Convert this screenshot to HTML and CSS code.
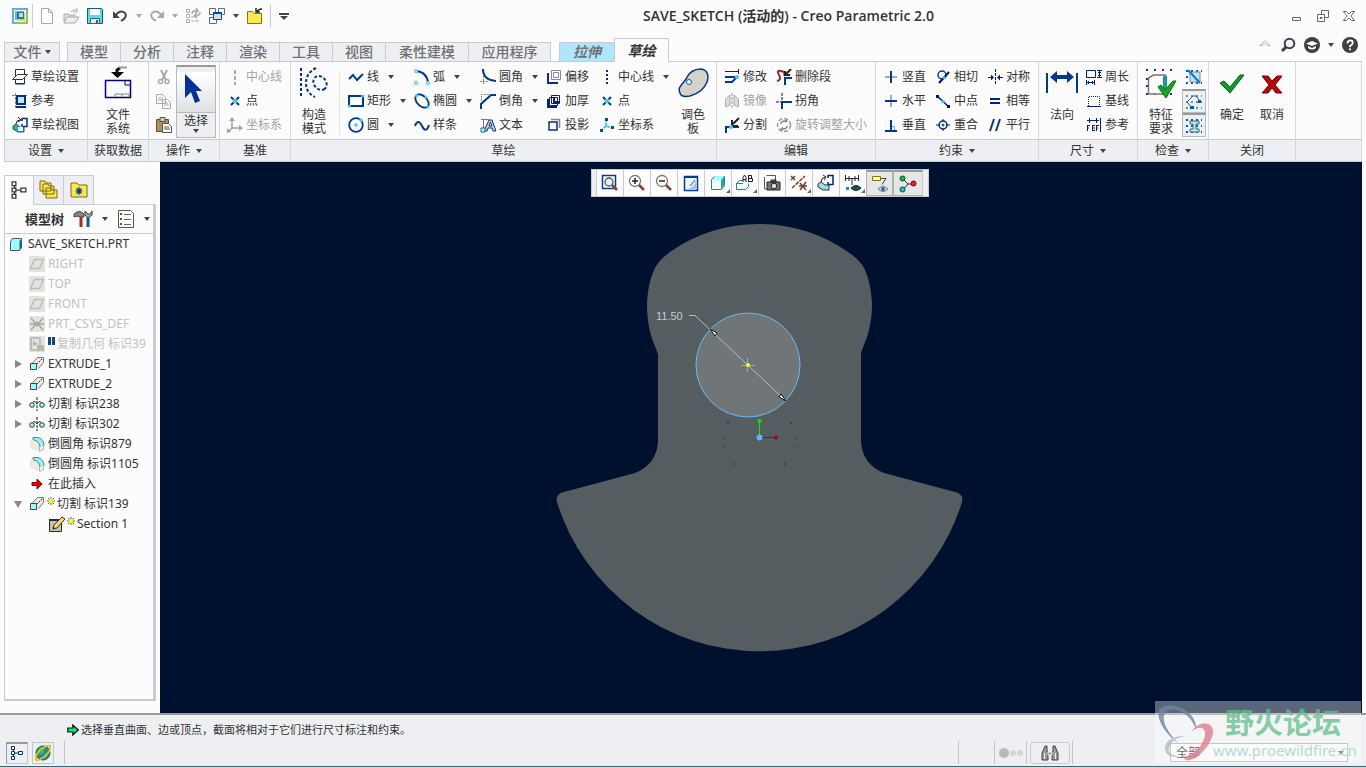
FILE: index.html
```html
<!DOCTYPE html>
<html lang="zh-CN">
<head>
<meta charset="utf-8">
<title>SAVE_SKETCH (活动的) - Creo Parametric 2.0</title>
<link rel="stylesheet" href="styles.css">
</head>
<body>
<svg class="defs" aria-hidden="true">
  <symbol id="i-plane" viewBox="0 0 16 16"><path fill="#e3e3e3" d="M0 0h16v16H0z"/><path d="M5.500 3.500h9l-4 9h-9z" fill="none" stroke="#c2bfae" stroke-width="1.500"/></symbol>
  <symbol id="i-extrude" viewBox="0 0 16 16"><path d="M3.500 7 8.500 1.500h6v5l-5 6" fill="#ecece4" stroke="#777"/><path d="M7.500 8.500 14 2" stroke="#222" stroke-dasharray="2 1"/><path d="M1.500 7.500h6v6h-6z" fill="#9ff" stroke="#445"/></symbol>
  <symbol id="i-cut" viewBox="0 0 16 16"><path d="M8 1v14" stroke="#222" stroke-dasharray="3 1"/><circle cx="3" cy="9" r="2.300" fill="#9ff" stroke="#333"/><circle cx="13" cy="9" r="2.300" fill="#9ff" stroke="#333"/><path d="M4 6q2-2 4 2M12 6q-2-2-4 2" fill="none" stroke="#333"/></symbol>
  <symbol id="i-round" viewBox="0 0 16 16"><path d="M1 4l3-2 7 1 3 5v6l-5 1-8-3z" fill="#eceadd"/><path d="M4 1.500h5q6 2 6 8l-4 2q0-6-7-8z" fill="#8ef6ff" stroke="#57808a"/><path d="M10.500 11v4.500l4-2v-4" fill="#f4f3ea" stroke="#bbb9aa"/></symbol>
  <symbol id="i-pt" viewBox="0 0 16 16"><path d="M4 4l8 8M12 4l-8 8" stroke="#003b94" stroke-width="2"/><path d="M6 6h4v4H6z" fill="#3ce"/></symbol>
  <symbol id="i-tree" viewBox="0 0 16 16"><path d="M4.500 3v10M4.500 8h6" stroke="currentColor"/><path d="M2.500 1.500h3v3h-3zM2.500 6.500h3v3h-3zM2.500 11.500h3v3h-3zM9.500 6.500h4v3h-4z" fill="#fff" stroke="currentColor"/></symbol>
  <symbol id="i-star" viewBox="0 0 8 8"><path d="M4 0v8M0 4h8M1 1l6 6M7 1 1 7" stroke="#333" stroke-width=".8"/><circle cx="4" cy="4" r="2.200" fill="#ff0"/></symbol>
  <symbol id="i-csys" viewBox="0 0 16 16"><path d="M5 2v9h9M5 11l-3 3" fill="none" stroke="currentColor" stroke-width="1.500"/><path d="M5 0l3 4H2zM16 11l-4 3V8zM0 16v-5l4 4z" fill="currentColor"/></symbol>
</svg>

<header class="titlebar">
  <div class="quick">
    <svg class="ic app" viewBox="0 0 16 16"><path fill="#5fb0d8" d="M0 0h16v16H0z"/><path fill="#8fc65a" d="M16 3v13H3z"/><path fill="#fff" d="M2 2h12v12H2z"/><path fill="#68b6dc" d="M3 3h9v9H3z"/><path fill="#c4dd6b" d="M5 5h8v8H5z"/><path fill="#267d9a" d="M5 4h7v7H5z"/><path fill="#b9dfe9" d="M7 5h4v4H7z"/></svg>
    <span class="bar"></span>
    <button aria-label="新建"><svg class="ic" viewBox="0 0 16 16"><path d="M2.500.5h7l4 4v11h-11zM9.500.5v4h4" fill="#fff" stroke="#aaa"/></svg></button>
    <button aria-label="打开"><svg class="ic" viewBox="0 0 16 16"><path d="M1 14V6h4l1 1h6v2" fill="#ddd" stroke="#aaa"/><path d="M4 9h12l-4 6H1z" fill="#eee" stroke="#aaa"/><path d="M8 4q3-4 6-1M14 0v4h-4" fill="none" stroke="#aaa"/></svg></button>
    <button aria-label="保存"><svg class="ic" viewBox="0 0 16 16"><path d="M.5.5h14l1 1v14H.5z" fill="#58dce8" stroke="#175c70"/><path fill="#fff" d="M3 1h10v6H3z"/><path fill="#e8e8e8" stroke="#367" d="M3.500 10.500h9v5h-9z"/><path fill="#367" d="M9 12h2v3H9z"/></svg></button>
    <button aria-label="撤消" class="gap1"><svg class="ic" viewBox="0 0 16 16"><path d="M3 8Q8 1 13 5q3 4-4 8" fill="none" stroke="#444" stroke-width="2"/><path d="M1 3v7h7z" fill="#444"/></svg></button>
    <i class="caret dim"></i>
    <button aria-label="重做"><svg class="ic" viewBox="0 0 16 16"><path d="M13 8Q8 1 3 5q-3 4 4 8" fill="none" stroke="#aaa" stroke-width="2"/><path d="M15 3v7H8z" fill="#aaa"/></svg></button>
    <i class="caret dim"></i>
    <button aria-label="重新生成"><svg class="ic" viewBox="0 0 16 16"><path d="M1.500 1.500h3v3h-3zM1.500 6.500h3v3h-3zM1.500 11.500h3v3h-3zM6 13h3M10 13h4M6 9h3" fill="none" stroke="#aaa"/><path d="M7 6q0-4 5-3M15 4q0 4-5 4M11 0l2 3-3 2M12 5 9 8l3 2" fill="none" stroke="#aaa" stroke-width="1.500"/></svg></button>
    <button aria-label="窗口"><svg class="ic" viewBox="0 0 16 16"><path d="M.5.500h6v6h-6zM9.500.500h6v6h-6zM.500 9.500h7v6h-7z" fill="#fff" stroke="#667"/><path d="M4.500 4.500h8v7h-8z" fill="#cfe2f5" stroke="#0548a8"/><path fill="#0548a8" d="M4 4h9v2H4z"/></svg></button>
    <i class="caret"></i>
    <button aria-label="关闭"><svg class="ic" viewBox="0 0 16 16"><path d="M.5 15.500v-12h5l2 2h7v10z" fill="#ffe84b" stroke="#86721b"/><path d="M10 4q1-3 5-3M9 0v4h4" fill="none" stroke="#222" stroke-width="1.500"/></svg></button>
    <span class="bar last"></span>
    <button aria-label="自定义" class="custom"><i></i><i class="caret"></i></button>
  </div>
  <h1>SAVE_SKETCH (活动的) - Creo Parametric 2.0</h1>
  <div class="winbtns">
    <button aria-label="最小化"><svg viewBox="0 0 12 12"><path d="M1.500 7.500h8v3h-8z" fill="none" stroke="#666"/></svg></button>
    <button aria-label="还原"><svg viewBox="0 0 12 12"><path d="M4.500 4V.5h7v7H8M.5 4.500h7v7h-7zM3 7.500h2v1H3z" fill="none" stroke="#666"/></svg></button>
    <button aria-label="关闭窗口"><svg viewBox="0 0 12 12"><path d="M.5 1.500h3L6 4l2.500-2.500h3L8 6l3.500 4.500h-3L6 8l-2.500 2.500h-3L4 6z" fill="none" stroke="#666"/></svg></button>
  </div>
</header>

<nav class="tabrow">
  <button class="tab file">文件<i class="caret"></i></button>
  <div class="tabs">
    <button class="tab">模型</button><button class="tab">分析</button><button class="tab">注释</button><button class="tab">渲染</button><button class="tab">工具</button><button class="tab">视图</button><button class="tab wide">柔性建模</button><button class="tab wide">应用程序</button>
  </div>
  <button class="tab ctx">拉伸</button><button class="tab active">草绘</button>
  <div class="help">
    <button aria-label="最小化功能区"><svg viewBox="0 0 16 16" width="14"><path d="M2 8.500 8 3l6 5.500h-3.500L8 6 5.500 8.500z" fill="none" stroke="#aaa"/></svg></button>
    <button aria-label="搜索"><svg viewBox="0 0 16 16" width="16"><circle cx="9.500" cy="6.500" r="4.800" fill="#eef7ff" stroke="#3c3f43" stroke-width="2"/><path d="M6 10l-4 4" stroke="#3c3f43" stroke-width="3"/></svg></button>
    <button aria-label="学习中心"><svg viewBox="0 0 16 16" width="16"><circle cx="8" cy="8" r="8" fill="#3c3f43"/><path d="M2 6.500 8 4l6 2.500L8 9zM4 9v2q4 3 8 0V9L8 11z" fill="#fff"/></svg></button>
    <i class="caret"></i>
    <button aria-label="帮助"><svg viewBox="0 0 16 16" width="16"><circle cx="8" cy="8" r="8" fill="#3c3f43"/><path d="M5.500 6.500q0-3 2.800-3 2.500 0 2.500 2.200Q10.800 7.500 8 9v1.200" fill="none" stroke="#fff" stroke-width="1.800"/><circle cx="8" cy="12.300" r="1.100" fill="#fff"/></svg></button>
  </div>
</nav>

<main class="ribbon">
  <section class="group">
    <div class="body pad">
      <div class="col">
        <button class="t"><svg class="ic" viewBox="0 0 16 16"><path d="M3.500.5h9v14h-9z" fill="#fff" stroke="#003087"/><path d="M5.500 5.500h10l-5 5H.5z" fill="#fff" stroke="#333"/><path d="M3.500 11v4h9V9" fill="none" stroke="#003087"/></svg>草绘设置</button>
        <button class="t"><svg class="ic" viewBox="0 0 16 16"><path d="M0 2.500h16M3.500 0v16" stroke="#888" stroke-dasharray="3 1"/><path d="M4 2h10v10H4z" fill="#003087"/><path d="M6 4h6v6H6z" fill="#c6e5dc"/><path d="M4 14h10" stroke="#003087" stroke-width="2"/></svg>参考</button>
        <button class="t"><svg class="ic" viewBox="0 0 16 16"><path d="M10 1.500h5v8h-5M10 1v3M10 9V7" fill="none" stroke="#003087" stroke-width="1.500"/><path d="M4 7q0-4 4-4M6 0l3 3-3 2" fill="none" stroke="#222"/><path d="M1 9l3-2 4 3h4v5H6l-5-3z" fill="#3aa" stroke="#355"/><path fill="#cff" d="M6 10h5v4H6z"/></svg>草绘视图</button>
      </div>
    </div>
    <div class="label">设置<i class="caret"></i></div>
  </section>
  <section class="group">
    <div class="body center">
      <button class="big files"><svg viewBox="0 0 28 34"><path d="M1.500 14.500h25v17h-25z" fill="#fafafa" stroke="#00008b" stroke-width="1.500"/><path d="M21 14v5h5" fill="none" stroke="#00008b"/><path d="M11 31v-3h14v3M18 28v3" fill="none" stroke="#888"/><path d="M7 6h13l-6.500 6z"/><path d="M13 7V4l3-2" fill="none" stroke="#111" stroke-width="3"/><path d="M15 1.500h8" stroke="#999" stroke-width="2"/></svg>文件<br>系统</button>
    </div>
    <div class="label">获取数据</div>
  </section>
  <section class="group">
    <div class="body pad">
      <div class="col narrow">
        <button class="t" aria-label="剪切"><svg class="ic" viewBox="0 0 16 16"><path d="M5 1l5 10M11 1 6 11" stroke="#aaa" stroke-width="2"/><circle cx="4.500" cy="12.500" r="2" fill="none" stroke="#aaa" stroke-width="1.500"/><circle cx="11" cy="12.500" r="2" fill="none" stroke="#aaa" stroke-width="1.500"/></svg></button>
        <button class="t" aria-label="复制"><svg class="ic" viewBox="0 0 16 16"><path d="M.5 1.500h6l3 3v6h-9zM2 5h5M2 7h5M6.500 6.500h5l3 3v6h-8zM8 10h4M8 12h5" fill="#fbfbfb" stroke="#aaa"/></svg></button>
        <button class="t" aria-label="粘贴"><svg class="ic" viewBox="0 0 16 16"><path d="M.5 2.500h12v12H.5z" fill="#ae925a" stroke="#665132"/><path d="M4 .5h5v4H4z" fill="#ccc" stroke="#555"/><path d="M6.500 6.500h6l3 3v6h-9zM8 10h5M8 12h6" fill="#fff" stroke="#555"/></svg></button>
      </div>
      <button class="pick"><span><svg viewBox="0 0 24 34"><path d="M3 2v24l6-6 4 11 5-2-4-10h6z" fill="#003399"/></svg></span>选择<i class="caret"></i></button>
    </div>
    <div class="label">操作<i class="caret"></i></div>
  </section>
  <section class="group">
    <div class="body pad">
      <div class="col">
        <button class="t off" disabled><svg class="ic" viewBox="0 0 16 16"><path d="M8 1v15" stroke="#aaa" stroke-width="2" stroke-dasharray="4 2"/></svg>中心线</button>
        <button class="t"><svg class="ic"><use href="#i-pt"/></svg>点</button>
        <button class="t off" disabled><svg class="ic"><use href="#i-csys"/></svg>坐标系</button>
      </div>
    </div>
    <div class="label">基准</div>
  </section>
  <section class="group">
    <div class="body pad">
      <button class="big construct"><svg viewBox="0 0 30 34"><g fill="none" stroke="#003399" stroke-width="2" stroke-dasharray="3 2"><path d="M2 2v30M17 2Q7 7 7 17t9 14"/><ellipse cx="21" cy="17" rx="7.500" ry="6" transform="rotate(50 21 17)"/></g></svg>构造<br>模式</button>
      <div class="col c1 ruled">
        <button class="t"><svg class="ic" viewBox="0 0 16 16"><path d="M1 10l4-4 4 5 6-6" fill="none" stroke="#003894" stroke-width="2"/></svg>线<i class="caret"></i></button>
        <button class="t"><svg class="ic" viewBox="0 0 16 16"><path d="M1 3h14v10H1z" fill="none" stroke="#003894" stroke-width="2"/><circle cx="1.500" cy="13" r="1.500" fill="#4cf"/><circle cx="14.500" cy="3" r="1.500" fill="#4cf"/></svg>矩形<i class="caret"></i></button>
        <button class="t"><svg class="ic" viewBox="0 0 16 16"><circle cx="8" cy="8" r="6.800" fill="none" stroke="#003894" stroke-width="1.800"/><circle cx="8" cy="8" r="1.800" fill="#4cf"/><circle cx="13" cy="3" r="1.800" fill="#4cf"/></svg>圆<i class="caret"></i></button>
      </div>
      <div class="col c1">
        <button class="t"><svg class="ic" viewBox="0 0 16 16"><path d="M2 2q11 1 12 12" fill="none" stroke="#003894" stroke-width="2"/><g fill="#dff" stroke="#2bc5f3"><circle cx="2" cy="2" r="1.500"/><circle cx="14" cy="14" r="1.500"/><circle cx="2" cy="14" r="1.500"/></g></svg>弧<i class="caret"></i></button>
        <button class="t"><svg class="ic" viewBox="0 0 16 16"><ellipse cx="8" cy="8" rx="8" ry="5" transform="rotate(45 8 8)" fill="none" stroke="#003894" stroke-width="1.800"/><g fill="#4cf"><circle cx="2.500" cy="2.500" r="1.500"/><circle cx="12" cy="4" r="1.500"/><circle cx="14" cy="14" r="1.500"/></g></svg>椭圆<i class="caret"></i></button>
        <button class="t"><svg class="ic" viewBox="0 0 16 16"><path d="M1 9q3-8 7 0t7-1" fill="none" stroke="#003894" stroke-width="2"/></svg>样条</button>
      </div>
      <div class="col c1">
        <button class="t"><svg class="ic" viewBox="0 0 16 16"><path d="M3.500 7v9M0 12.500h9" stroke="#888" stroke-dasharray="2 1"/><path d="M3 0q0 11 13 12" fill="none" stroke="#003894" stroke-width="2"/></svg>圆角<i class="caret"></i></button>
        <button class="t"><svg class="ic" viewBox="0 0 16 16"><path d="M1.500 8V1.500H9" fill="none" stroke="#888" stroke-dasharray="2 1"/><path d="M1 16v-5L11 2h5" fill="none" stroke="#003894" stroke-width="2"/></svg>倒角<i class="caret"></i></button>
        <button class="t"><svg class="ic" viewBox="0 0 16 16"><path d="M1 2.500h8M3.500 2v9" stroke="#777"/><path d="M4 14 9 3h3l4 11h-3l-1-3H8l-1 3zM9 9h3l-1.500-4z" fill="#cfd0c8" stroke="#003894"/><path d="M1 11h4v4H1z" fill="#dff" stroke="#06a"/></svg>文本</button>
      </div>
      <div class="col c2">
        <button class="t"><svg class="ic" viewBox="0 0 16 16"><path d="M5.500 1.500h9v9h-9zM7.500 3.500h5v5h-5z" fill="none" stroke="#888"/><path d="M2 4v10h10" fill="none" stroke="#003087" stroke-width="2"/></svg>偏移</button>
        <button class="t"><svg class="ic" viewBox="0 0 16 16"><path d="M5.500 2.500h8v8h-8zM3.500 4.500h8v8h-8z" fill="none" stroke="#00208b"/><path d="M2 6v8h9M8 5v4h6" fill="none" stroke="#00208b" stroke-width="2"/></svg>加厚</button>
        <button class="t"><svg class="ic" viewBox="0 0 16 16"><path d="M5 2.500h8.500V11" fill="none" stroke="#888" stroke-width="1.500"/><path d="M3 5h8v8H3z" fill="#fff" stroke="#003087" stroke-width="1.500"/></svg>投影</button>
      </div>
      <div class="col c3">
        <button class="t"><svg class="ic" viewBox="0 0 16 16"><path d="M8 1v15" stroke="#003087" stroke-width="2" stroke-dasharray="2 2"/></svg>中心线<i class="caret"></i></button>
        <button class="t"><svg class="ic"><use href="#i-pt"/></svg>点</button>
        <button class="t"><svg class="ic" viewBox="0 0 16 16"><path d="M7 2v7l7 2M7 9l-5 5" fill="none" stroke="#4bc7ec" stroke-width="2" stroke-dasharray="3 1"/><path d="M6 1h3v3H6zM12 9h3v3h-3zM1 12h3v3H1z" fill="#00509e"/></svg>坐标系</button>
      </div>
      <button class="big palette"><svg viewBox="0 0 32 34"><path d="M3 27C0 21 6 18 9 13 12 6 17 3 24 3 31 4 32 10 30 16 27 24 20 28 13 30 8 31 4 31 3 27z" fill="#d5d3c7" stroke="#003894" stroke-width="1.500"/><circle cx="12" cy="16" r="2.500" fill="#fff" stroke="#0657a8"/></svg>调色<br>板</button>
    </div>
    <div class="label">草绘</div>
  </section>
  <section class="group">
    <div class="body pad">
      <div class="col c4">
        <button class="t"><svg class="ic" viewBox="0 0 16 16"><path d="M1 2.500h14M14.500 0v5" stroke="#222"/><path d="M1 8h10M1 13h7l5-5" fill="none" stroke="#003894" stroke-width="2"/><circle cx="13" cy="8" r="2" fill="#4cf"/></svg>修改</button>
        <button class="t off" disabled><svg class="ic" viewBox="0 0 16 16"><path d="M8 0v16" stroke="#999" stroke-dasharray="3 1"/><path d="M1.500 6 6 2v10l-4.500 2zM14.500 6 10 2v10l4.500 2z" fill="#ddd" stroke="#aaa"/></svg>镜像</button>
        <button class="t"><svg class="ic" viewBox="0 0 16 16"><path d="M2 16v-6h13" fill="none" stroke="#003894" stroke-width="2"/><path d="M15 1 9 7M8 3v6h6" fill="none" stroke="#222" stroke-width="2"/><circle cx="7" cy="10" r="2" fill="#4cf"/></svg>分割</button>
      </div>
      <div class="col">
        <button class="t"><svg class="ic" viewBox="0 0 16 16"><path d="M1 12Q6 11 3 6T5 2t3 5" fill="none" stroke="#a22424" stroke-width="2"/><path d="M9 16V9h7" fill="none" stroke="#003894" stroke-width="2"/><path d="M15 0l-6 6M9 2v4h5" fill="none" stroke="#222" stroke-width="2"/></svg>删除段</button>
        <button class="t"><svg class="ic" viewBox="0 0 16 16"><path d="M6 0v7M0 9h5" stroke="#888" stroke-width="2" stroke-dasharray="3 1"/><path d="M6 16V9h10" fill="none" stroke="#003894" stroke-width="2"/></svg>拐角</button>
        <button class="t off" disabled><svg class="ic" viewBox="0 0 16 16"><circle cx="8" cy="8" r="6.500" fill="none" stroke="#999" stroke-width="1.500" stroke-dasharray="4 2"/><path d="M5 7q0-3 4-3M11 9q0 3-4 3" fill="none" stroke="#888" stroke-width="1.500"/><path d="M9 2l3 2-3 2zM7 10l-3 2 3 2z" fill="#888"/></svg>旋转调整大小</button>
      </div>
    </div>
    <div class="label">编辑</div>
  </section>
  <section class="group">
    <div class="body pad">
      <div class="col c5">
        <button class="t"><svg class="ic" viewBox="0 0 16 16"><path d="M2 8h12" stroke="#aaa" stroke-width="2"/><path d="M8 2v12" stroke="#003894" stroke-width="2"/></svg>竖直</button>
        <button class="t"><svg class="ic" viewBox="0 0 16 16"><path d="M8 2v12" stroke="#aaa" stroke-width="2"/><path d="M2 8h12" stroke="#003894" stroke-width="2"/></svg>水平</button>
        <button class="t"><svg class="ic" viewBox="0 0 16 16"><path d="M9 9.500h2.500V13" fill="none" stroke="#999"/><path d="M8 3v10M2 14h12" stroke="#003894" stroke-width="2"/></svg>垂直</button>
      </div>
      <div class="col c5">
        <button class="t"><svg class="ic" viewBox="0 0 16 16"><circle cx="7" cy="6" r="4" fill="none" stroke="#003894" stroke-width="1.500"/><path d="M4 14 14 3" stroke="#00107d" stroke-width="2"/><circle cx="9" cy="8.500" r="1.500" fill="#3ce"/></svg>相切</button>
        <button class="t"><svg class="ic" viewBox="0 0 16 16"><path d="M2 3l12 11" stroke="#00107d" stroke-width="1.500"/><path d="M1 2h3v3H1zM12 12h3v3h-3z" fill="#00107d"/><circle cx="8" cy="8.500" r="1.800" fill="#3ce"/></svg>中点</button>
        <button class="t"><svg class="ic" viewBox="0 0 16 16"><circle cx="8" cy="8" r="4" fill="none" stroke="#00208b" stroke-width="1.500"/><path d="M1 8h4M11 8h4M8 2v2M8 12v2" stroke="#00208b"/><circle cx="8" cy="8" r="1.500" fill="#07a"/></svg>重合</button>
      </div>
      <div class="col">
        <button class="t"><svg class="ic" viewBox="0 0 16 16"><path d="M8.500 0v16" stroke="#00208b" stroke-dasharray="3 1"/><path d="M1 8.500h5M11 8.500h5" stroke="#00208b"/><path d="M4 5.500l3 3-3 3zM13 5.500l-3 3 3 3z" fill="#00208b"/></svg>对称</button>
        <button class="t"><svg class="ic" viewBox="0 0 16 16"><path d="M3 6h10M3 10h10" stroke="#00208b" stroke-width="2"/></svg>相等</button>
        <button class="t"><svg class="ic" viewBox="0 0 16 16"><path d="M3 14 7 2M9 14l4-12" stroke="#003894" stroke-width="2"/></svg>平行</button>
      </div>
    </div>
    <div class="label">约束<i class="caret"></i></div>
  </section>
  <section class="group">
    <div class="body pad">
      <button class="big normal"><svg viewBox="0 0 32 34"><path d="M1 7v20M31 7v20" stroke="#003894" stroke-width="2"/><path d="M4 11l7-6v4h10V5l7 6-7 6v-4H11v4z" fill="#003894"/></svg>法向</button>
      <div class="col">
        <button class="t"><svg class="ic" viewBox="0 0 16 16"><path d="M.5 1.500h9v7h-9zM11 1.500h5M11 8.500h5M13.500 1v8M.5 11v5M8.500 11v5M1 13.500h7M12 3.500h3M12 6.500h3M2.500 12v3M6.500 12v3" fill="none" stroke="#00208b"/></svg>周长</button>
        <button class="t"><svg class="ic" viewBox="0 0 16 16"><path d="M2.500 13V3.500h11V13" fill="none" stroke="#00208b" stroke-dasharray="1 1"/><path d="M1 13.500h14" stroke="#00208b"/></svg>基线</button>
        <button class="t"><svg class="ic" viewBox="0 0 16 16"><path d="M1 3.500h12M3.500 1v5M10.500 1v5M14.500 1v14M1.500 8v6M1 8.500h3M1 11h2M6 8.500h3M6 11h3M6 13.500h3M6.500 8v6M10.500 8v6M10 8.500h3M10 11h2" stroke="#00208b"/></svg>参考</button>
      </div>
    </div>
    <div class="label">尺寸<i class="caret"></i></div>
  </section>
  <section class="group">
    <div class="body pad">
      <button class="big check"><svg viewBox="0 0 32 34"><path d="M1 4h28M1 13h4M1 20h4M1 28h28" stroke="#003894" stroke-width="2" stroke-dasharray="2 6"/><path d="M3.500 12l5-3h12v16l-3 3h-14z" fill="#fff" stroke="#777" stroke-width="1.500"/><path d="M18 10h4v14l-4 3z" fill="#159d9d"/><path d="M13 21l3-2 4 5 8-9h3l-10 17z" fill="#1ba51b" stroke="#0c710c"/></svg>特征<br>要求</button>
      <div class="toggles">
        <button aria-label="着色封闭环"><svg class="ic" viewBox="0 0 16 16"><path d="M0 2h16M0 8h3M0 14h16" stroke="#005ab3" stroke-width="2" stroke-dasharray="2 3"/><path d="M4 3h10v10H4z" fill="#c9e1ee" stroke="#789"/><path d="M2 1l12 13" stroke="#007bdb" stroke-width="2"/></svg></button>
        <button class="on" aria-label="突出显示开放端"><svg class="ic" viewBox="0 0 16 16"><path d="M0 2h16M0 8h16M0 14h16" stroke="#3177bd" stroke-width="1.500" stroke-dasharray="2 3"/><path d="M5 13 1 8l6-6h3l4 5" fill="none" stroke="#456"/><path d="M4 12h4v3H4zM12 6h3v3h-3z" fill="#005ab3"/></svg></button>
        <button class="on" aria-label="重叠几何"><svg class="ic" viewBox="0 0 16 16"><path d="M0 2h16M0 8h16M0 14h16" stroke="#005ab3" stroke-width="2" stroke-dasharray="2 3"/><path d="M4 3h9v3h-3v5h3v3H4v-3h3V6H4z" fill="#b5ecf1" stroke="#367"/></svg></button>
      </div>
    </div>
    <div class="label">检查<i class="caret"></i></div>
  </section>
  <section class="group">
    <div class="body pad">
      <button class="big close"><svg viewBox="0 0 28 34"><path d="M2 17l4-2 6 6L22 9h4L12 27z" fill="#0b9b27" stroke="#08621c"/></svg>确定</button>
      <button class="big close"><svg viewBox="0 0 28 34"><path d="M4 10h6l4 5 5-5h5l-7 9 7 8h-6l-4-5-4 5H4l7-8z" fill="#b50909" stroke="#780000"/></svg>取消</button>
    </div>
    <div class="label">关闭</div>
  </section>
  <section class="group"><div class="body"></div><div class="label"></div></section>
</main>

<div class="work">
  <aside class="side">
    <div class="sidetabs">
      <button class="cur" aria-label="模型树"><svg class="tr"><use href="#i-tree"/></svg></button>
      <button aria-label="文件夹浏览器"><svg class="tr" viewBox="0 0 20 20"><path d="M1 11V1h5l1 2h5v8zM4 14V4h5l1 2h5v8zM7 18V8h5l1 2h5v8z" fill="#fbe849" stroke="#7a681b"/></svg></button>
      <button aria-label="收藏夹"><svg class="tr" viewBox="0 0 20 20"><path d="M2 17V3h6l2 2h8v12z" fill="#fbe849" stroke="#7a681b"/><path d="M10 7v8M6.500 11h7M7.500 8.500l5 5M12.500 8.500l-5 5" stroke="#003894" stroke-width="1.200"/></svg></button>
    </div>
    <div class="panel">
      <div class="phead"><b>模型树</b>
        <button aria-label="设置"><svg viewBox="0 0 20 20" width="20"><path d="M1 5q5-5 10 0v3H8L4 7 1 8z" fill="#888" stroke="#444"/><path d="M8 8v10" stroke="#a72a1a" stroke-width="3"/><path d="M15 8v10" stroke="#0959a5" stroke-width="3"/><path d="M12 2v4l3 3 4-3V2l-2 3h-2z" fill="#aaa" stroke="#444"/></svg></button><i class="caret"></i>
        <button aria-label="显示"><svg viewBox="0 0 18 20" width="18"><path d="M1.500 1.500h12l3 3v14h-15z" fill="#fffef4" stroke="#555"/><path d="M7 5.500h7M7 10.500h7M7 15.500h7" stroke="#666"/><path d="M3.500 4.500h1v1h-1zM3.500 9.500h1v1h-1zM3.500 14.500h1v1h-1z" stroke="#333"/></svg></button><i class="caret"></i>
      </div>
      <ul class="tree">
        <li class="root"><svg class="ic" viewBox="0 0 16 16"><path d="M2.500 5.500l2-3h9v9l-2 3h-9z" fill="#9ff" stroke="#456"/><path d="M11.500 14V5l2-2v9z" fill="#266"/></svg>SAVE_SKETCH.PRT</li>
        <li class="off"><i></i><svg class="ic"><use href="#i-plane"/></svg>RIGHT</li>
        <li class="off"><i></i><svg class="ic"><use href="#i-plane"/></svg>TOP</li>
        <li class="off"><i></i><svg class="ic"><use href="#i-plane"/></svg>FRONT</li>
        <li class="off"><i></i><svg class="ic" viewBox="0 0 16 16"><path fill="#e3e3e3" d="M0 0h16v16H0z"/><path d="M1 8h14M2 2l5 6-5 6M14 2 9 8l5 6M8 5v6" fill="none" stroke="#aaa897" stroke-width="1.500"/></svg>PRT_CSYS_DEF</li>
        <li class="off tight"><i></i><svg class="ic" viewBox="0 0 16 16"><path fill="#e3e3e3" d="M0 0h16v16H0z"/><path d="M2 2h9v12H2z" fill="none" stroke="#b5b3a2" stroke-width="1.500"/><path d="M8 9h7v6H8zM4 5l5 3-5 2z" fill="#b9b7a5"/></svg><svg class="mini" viewBox="0 0 8 8"><path d="M1 0h3v8H1zM5 0h3v8H5z" fill="#124583"/></svg>复制几何 标识39</li>
        <li><i class="shut"></i><svg class="ic"><use href="#i-extrude"/></svg>EXTRUDE_1</li>
        <li><i class="shut"></i><svg class="ic"><use href="#i-extrude"/></svg>EXTRUDE_2</li>
        <li><i class="shut"></i><svg class="ic"><use href="#i-cut"/></svg>切割 标识238</li>
        <li><i class="shut"></i><svg class="ic"><use href="#i-cut"/></svg>切割 标识302</li>
        <li><i></i><svg class="ic"><use href="#i-round"/></svg>倒圆角 标识879</li>
        <li><i></i><svg class="ic"><use href="#i-round"/></svg>倒圆角 标识1105</li>
        <li><i></i><svg class="ic" viewBox="0 0 16 16"><path d="M3 6.500h5V3l5 5-5 5V9.500H3z" fill="#e00" stroke="#900"/></svg>在此插入</li>
        <li class="tight"><i class="open"></i><svg class="ic"><use href="#i-extrude"/></svg><svg class="mini"><use href="#i-star"/></svg>切割 标识139</li>
        <li class="tight sub"><i></i><svg class="ic" viewBox="0 0 16 16"><path d="M.5 3.500h12v12H.5z" fill="#c9c0a4" stroke="#152b64"/><path fill="#152b64" d="M0 3h13v2H0z"/><path d="M4 13l1-4 8-8 3 2-8 9z" fill="#f8d568" stroke="#333"/><path fill="#111" d="M4 13v-2l2 1z"/></svg><svg class="mini"><use href="#i-star"/></svg>Section 1</li>
      </ul>
    </div>
  </aside>
  <section class="canvas">
    <svg class="scene" viewBox="160 162 1202 551" role="img" aria-label="草绘">
      <path d="M658 354C654 342 647 332 647 303C648 287 651 276 655 268Q659 260 670 252A155 155 0 0 1 848 252Q860 260 864 268C868 276 871 287 872 303C872 332 864 342 861 354V441Q862 464 884 473L955 492Q964 494 962 502A212 212 0 0 1 557 502Q555 494 564 492L635 473Q657 464 658 441Z" fill="#565d60"/>
      <circle cx="748" cy="365" r="52" fill="#707577" stroke="#63baff"/>
      <path d="M689 315.500h6L785 400" fill="none" stroke="#bbb"/>
      <path d="M710 329l7 4-2 3zM786 401l-7-4 2-3z" fill="#eee" stroke="#111"/>
      <path d="M741 365.500h14M747.500 358v14" stroke="#63baff"/><circle cx="748" cy="365" r="2" fill="#ff0"/>
      <path d="M759.500 421v16" stroke="#0e0" /><path d="M759 437.500h17" stroke="#a00036"/>
      <circle cx="759.500" cy="421" r="2" fill="#0e0"/><circle cx="776" cy="437.500" r="2" fill="#a00036"/><circle cx="759.500" cy="437.500" r="3" fill="#5bb2ff"/>
      <path d="M727 423h2M790 423h2M723 439h1M795 439h1M724 447h1M794 447h1M733 464h2M784 464h2" stroke="#252b2e"/>
      <text x="656" y="320" class="dim-text">11.50</text>
    </svg>
    <div class="gbar">
      <button aria-label="重新调整"><svg viewBox="0 0 18 18"><path d="M1.500 1.500h13v13h-13z" fill="#fff" stroke="#003f91" stroke-width="1.500"/><circle cx="8" cy="8" r="4" fill="#e4f1f5" stroke="#555" stroke-width="1.300"/><path d="M11 11l5 5" stroke="#784b35" stroke-width="2.500"/></svg></button>
      <button aria-label="放大"><svg viewBox="0 0 18 18"><circle cx="7" cy="7" r="5.500" fill="#fff" stroke="#777" stroke-width="1.300"/><path d="M4 7h6M7 4v6" stroke="#222" stroke-width="1.500"/><path d="M11 11l5 5" stroke="#784b35" stroke-width="2.500"/></svg></button>
      <button aria-label="缩小"><svg viewBox="0 0 18 18"><circle cx="7" cy="7" r="5.500" fill="#fff" stroke="#777" stroke-width="1.300"/><path d="M4 7h6" stroke="#222" stroke-width="1.500"/><path d="M11 11l5 5" stroke="#784b35" stroke-width="2.500"/></svg></button>
      <button aria-label="重画"><svg viewBox="0 0 18 18"><path d="M2.500 2.500h13v14h-13z" fill="#eef7ff" stroke="#003f91" stroke-width="1.500"/><path fill="#003f91" d="M2 2h14v2H2z"/><path d="M5 15q7-1 9-9v9z" fill="#a9c5dd"/><path d="M8 12l5-6" stroke="#35506a"/></svg></button>
      <button class="more" aria-label="显示样式"><svg viewBox="0 0 18 18"><path d="M2.500 5.500l3-3h10v9l-3 4h-10z" fill="#eefcfc" stroke="#477"/><path d="M12 6l3-4v10l-3 3z" fill="#2aa"/><path d="M3 6h9l3-4H6z" fill="#9ff"/></svg></button>
      <button class="more" aria-label="已命名视图"><svg viewBox="0 0 18 18"><path d="M.5 9.500l3-3h3M.5 9.500v6h9l3-3v-3M.5 9.500H7" fill="#eff" stroke="#477"/><path d="M7 8V3.500L8.500 1 10 3.500V8M7 5.500h3M12.500 1v7M12.500 1.500h3v3h-3M12.500 4.500h4v3h-4" fill="none" stroke="#222"/></svg></button>
      <button aria-label="视图管理器"><svg viewBox="0 0 18 18"><path d="M3.500 1.500h9v5M1.500 3v12h4" fill="none" stroke="#555"/><path d="M4 8h13v8H4zM8 6h5v2H8z" fill="#777" stroke="#222"/><circle cx="11" cy="12" r="2.800" fill="#ddd" stroke="#222"/></svg></button>
      <button class="more" aria-label="基准显示"><svg viewBox="0 0 18 18"><path d="M1 2l4 4M5 2 1 6M10 9l6 7M16 8l-6 8M9 12h8" stroke="#754225" stroke-width="1.500"/><path d="M2 14 15 2" stroke="#754225" stroke-width="1.500" stroke-dasharray="4 1"/></svg></button>
      <button aria-label="草绘视图方向"><svg viewBox="0 0 18 18"><path d="M11 1.500h5v9h-5M11 1v3M11 11V8" fill="none" stroke="#00208b" stroke-width="1.500"/><path d="M4 8q0-4 4-5M6 1l3 2-2 3" fill="none" stroke="#222"/><path d="M1 10l3-2 4 3h4v5H6l-5-3z" fill="#9edddd" stroke="#333"/></svg></button>
      <button class="more" aria-label="草绘器显示"><svg viewBox="0 0 18 18"><path d="M1.500 1v6M14.500 1v6M2 4.500h12M5 2v5M11 2v5M8 5v6" stroke="#223"/><path d="M2 13h3v3H2z" fill="#09d"/><path d="M7 14q5-5 10 0-5 5-10 0z" fill="#155" stroke="#222"/></svg></button>
      <button class="press" aria-label="注释显示"><svg viewBox="0 0 18 18"><path d="M1.500 1.500h8v4h-8z" fill="#ffffb3" stroke="#871"/><path d="M10 3.500h5l-4 6" fill="none" stroke="#444"/><path d="M7 14q5-5 10 0-5 5-10 0z" fill="#ddd" stroke="#777"/><circle cx="12" cy="14" r="2" fill="#469"/></svg></button>
      <button class="press" aria-label="旋转中心"><svg viewBox="0 0 18 18"><path d="M4 4l5 5h6M9 9l-5 6" fill="none" stroke="#333"/><circle cx="3.500" cy="3.500" r="2.500" fill="#0c0" stroke="#145"/><circle cx="14.500" cy="8.500" r="2.500" fill="#e23" stroke="#700"/><circle cx="3.500" cy="14.500" r="2.500" fill="#1cc" stroke="#045"/></svg></button>
    </div>
  </section>
</div>

<footer class="status">
  <p class="msg"><svg viewBox="0 0 12 12" width="12"><path d="M.8 4h5V1l5.500 5-5.500 5V8h-5z" fill="#13e873" stroke="#111" stroke-width="1.200"/></svg>选择垂直曲面、边或顶点，截面将相对于它们进行尺寸标注和约束。</p>
  <div class="srow">
    <button class="sq down" aria-label="切换导航器"><svg class="ic navy"><use href="#i-tree"/></svg></button>
    <button class="sq" aria-label="浏览器"><svg class="ic" viewBox="0 0 16 16"><circle cx="8" cy="8" r="7" fill="#178ac5" stroke="#066"/><path d="M4 3q5-3 5 2T5 9 3 7zM9 10q4-5 4-2t-4 6z" fill="#3bc14a"/><path d="M1 15Q0 8 8 3T15 2Q15 8 9 12T1 15z" fill="none" stroke="#f5b800" stroke-width="1.800"/></svg></button>
    <span class="sep s1"></span><span class="grow"></span>
    <span class="sep"></span><span class="slot"></span><span class="sep"></span>
    <span class="dots"><i></i><i></i><i></i></span>
    <span class="sep"></span>
    <button class="find" aria-label="查找"><svg viewBox="0 0 18 16" width="18"><path d="M2 6l2-5h2v5l1 2v7H1V8zM16 6l-2-5h-2v5l-1 2v7h6V8z" fill="#999" stroke="#444"/><path d="M7 7h4v3H7zM3.500 8v6M14.500 8v6" fill="#999" stroke="#eee"/></svg></button>
    <span class="sep"></span>
    <span class="filter"><select aria-label="选择过滤器"><option>全部</option></select><i class="caret"></i></span>
  </div>
  <div class="mark">
    <svg viewBox="0 0 60 60" width="60"><path d="M41 28C43 11 22 1 9 4C-4 9 8 31 23 41C9 27 4 12 14 8C25 5 38 16 41 28Z" fill="#7186a2"/><path d="M36 30C46 17 58 21 58 29C58 43 39 61 31 58L26 54C37 57 51 41 50 30C49 25 43 24 36 30Z" fill="#e07f8b"/><path d="M30 34C18 33 9 40 10 47C11 54 17 56 24 54C16 54 13 50 14 46C15 41 20 36 30 34Z" fill="#aebccb"/></svg>
    <div><strong>野火论坛</strong><span>www.proewildfire.cn</span></div>
  </div>
</footer>
</body>
</html>
```
FILE: styles.css
```css
* { box-sizing: border-box; }
body {
  margin: 0;
  min-height: 100vh;
  display: flex;
  flex-direction: column;
  background: #fcfcfc;
  color: #333;
  font: 12px/16px "Noto Sans", "Noto Sans CJK SC", sans-serif;
}
button {
  font: inherit;
  color: inherit;
  background: none;
  border: 0;
  padding: 0;
}
svg { display: block; flex: none; }
.defs { position: absolute; width: 0; height: 0; }
.ic { width: 16px; height: 16px; }
.caret {
  flex: none;
  display: inline-block;
  border: 3px solid transparent;
  border-top: 4px solid #444;
  border-bottom: 0;
}
.caret.dim { border-top-color: #aaa; margin: 0 -1px; }

.titlebar {
  display: grid;
  grid-template-columns: 1fr auto 1fr;
  align-items: center;
  height: 32px;
  padding: 0 11px;
}
.quick { display: flex; align-items: center; gap: 8px; }
.quick .app { margin: 0 -4px 0 1px; }
.quick .gap1 { margin: 0 1px; }
.quick .bar { width: 1px; height: 24px; background: #ccc; }
.quick .bar + button { margin-left: -2px; }
.quick .last { margin-left: -1px; }
.quick .last + .custom {
  display: flex;
  flex-direction: column;
  align-items: center;
  gap: 1px;
  margin-left: 0;
}
.custom i:first-child { width: 10px; height: 2px; background: #444; }
.custom .caret { border-width: 4px 4px 0; }
h1 {
  margin: 0;
  padding-left: 211px;
  font: 600 14px/16px "Open Sans", "Noto Sans CJK SC", sans-serif;
  color: #333;
}
.winbtns { display: flex; justify-content: flex-end; gap: 14px; }
.winbtns svg { width: 12px; height: 12px; }

.tabrow {
  display: flex;
  align-items: flex-end;
  height: 30px;
  padding: 0 8px 0 4px;
  position: relative;
  z-index: 1;
  margin-bottom: -1px;
}
.tab {
  height: 20px;
  border: 1px solid #c8ccd0;
  background: #edeff2;
  color: #707376;
  font-size: 14px;
  line-height: 18px;
  font-weight: 500;
  width: 56px;
}
.tab.file { display: flex; align-items: center; justify-content: center; gap: 3px; }
.tabs { display: flex; margin: 0 8px 0 7px; }
.tabs .tab { width: 53px; border-right: 0; }
.tabs .tab.wide { width: 83px; }
.tabs .tab:last-child { border-right: 1px solid #c8ccd0; }
.tab.ctx { width: 55px; background: #b1e5ff; border-right: 0; font-weight: bold; font-style: italic; }
.tab.active {
  width: 55px;
  height: 24px;
  padding-top: 2px;
  background: #fcfcfc;
  border-bottom-color: #fcfcfc;
  color: #333;
  line-height: 20px;
  font-weight: bold;
  font-style: italic;
}
.help { margin-left: auto; padding-bottom: 5px; align-self: center; display: flex; align-items: center; gap: 8px; }

.ribbon {
  display: grid;
  grid-template-columns: 83px 61px 71px 71px 426px 159px 163px 99px 71px 87px 1fr;
  margin: 0 4px;
  border: 1px solid #c8ccd0;
  border-right: 0;
}
.group { display: flex; flex-direction: column; border-right: 1px solid #d5d8db; }
.body { display: flex; min-height: 77px; padding-top: 3px; }
.pad { padding-left: 7px; }
.center { justify-content: center; }
.label {
  display: flex;
  align-items: center;
  justify-content: center;
  gap: 6px;
  height: 22px;
  border-top: 1px solid #c8ccd0;
  background: #edeff2;
}
.col { display: flex; flex-direction: column; }
.c1 { width: 66px; }
.ruled { position: relative; }
.ruled::before { content: ""; position: absolute; left: -9px; top: 8px; bottom: 4px; width: 1px; background: #e2e4e6; }
.c2 { width: 53px; }
.c3 { width: 78px; }
.c4, .c5 { width: 52px; }
.t {
  display: flex;
  align-items: center;
  gap: 3px;
  height: 24px;
  white-space: nowrap;
}
.t .caret { margin-left: 6px; }
.off { color: #a3a3a3; }
.narrow { width: 20px; }
.big {
  display: flow-root;
  align-self: flex-start;
  line-height: 14px;
  text-align: center;
}
.big svg { width: 32px; height: 34px; margin: 1px auto 8px; }
.big.files svg, .big.close svg { width: 28px; }
.construct { width: 32px; margin-right: 18px; }
.palette { width: 32px; }
.normal { width: 32px; margin-right: 8px; }
.check { width: 32px; margin-right: 5px; }
.close { width: 40px; }
.close:first-child { margin-left: -4px; }
.pick {
  width: 40px;
  height: 73px;
  border: 1px solid #b7babd;
  border-top: 2px solid #999;
  background: #edeff2;
  line-height: 16px;
}
.pick span {
  display: flex;
  justify-content: center;
  height: 41px;
  border-bottom: 1px solid #b7babd;
  background: linear-gradient(#fff, #dfe1e4);
}
.pick svg { width: 24px; height: 34px; margin-right: 4px; }
.pick .caret { display: block; width: 6px; margin: 0 auto; }
.toggles { display: flex; flex-direction: column; }
.toggles button { width: 24px; height: 24px; display: grid; place-items: center; }
.toggles .on { border: 1px solid #b7babd; border-top: 2px solid #999; background: #edeff2; }

.work { flex: 1; display: flex; margin-right: 4px; min-height: 500px; }
.side { width: 160px; flex: none; display: flex; flex-direction: column; padding: 13px 4px 12px; }
.sidetabs { display: flex; position: relative; z-index: 1; margin-bottom: -1px; }
.sidetabs button {
  display: grid;
  place-items: center;
  width: 30px;
  height: 30px;
  border: 1px solid #c8ccd0;
  border-left: 0;
  background: #edeff2;
}
.sidetabs .cur { border-left: 1px solid #c8ccd0; border-bottom-color: #fcfcfc; background: #fcfcfc; }
.tr { width: 20px; height: 20px; color: #333; }
.panel {
  flex: 1;
  border: 1px solid #c8ccd0;
  border-width: 1px 3px 2px 1px;
}
.phead {
  display: flex;
  align-items: center;
  height: 29px;
  gap: 9px;
  padding-left: 20px;
  border-bottom: 1px solid #c8ccd0;
}
.phead b { font-size: 13px; }
.tree { list-style: none; margin: 0; padding: 0; }
.tree li { display: flex; align-items: center; gap: 3px; height: 20px; padding-left: 7px; white-space: nowrap; }
.tree .root { padding-left: 3px; gap: 4px; }
.tree li > i { width: 12px; margin-right: 2px; display: flex; justify-content: center; }
.tree .off { color: #c2c2c2; }
.tree .tight { gap: 2px; }
.tree .tight > i { margin-right: 3px; }
.tree .sub { padding-left: 27px; }
.shut::before { content: ""; border: 4px solid transparent; border-left: 7px solid #888; border-right: 0; }
.open::before { content: ""; border: 4px solid transparent; border-top: 7px solid #888; border-bottom: 0; }
.mini { width: 8px; height: 8px; align-self: flex-start; margin-top: 3px; }

.canvas { flex: 1; position: relative; background: #001130; overflow: hidden; }
.scene { position: absolute; inset: 0; width: 100%; height: 100%; }
.dim-text { font: 11px "Liberation Sans", sans-serif; fill: #c8cacb; }
.gbar {
  position: absolute;
  top: 7px;
  left: 50%;
  transform: translateX(-50%);
  display: flex;
  height: 28px;
  margin-left: -1px;
  padding: 0 5px 0 4px;
  border: 1px solid #c8ccd0;
  background: #edeff2;
}
.gbar button {
  display: grid;
  place-items: center;
  width: 27px;
  background: #fcfcfc;
  border-left: 1px solid #c8ccd0;
  position: relative;
}
.gbar svg { width: 18px; height: 18px; }
.gbar button:last-child { width: 30px; border-right: 1px solid #c8ccd0; }
.gbar .more::after {
  content: "";
  position: absolute;
  right: 1px;
  bottom: 3px;
  border: 2px solid transparent;
  border-right-color: #666;
  border-bottom-color: #666;
}
.gbar .press { background: #e4e6e8; border: 1px solid #b0b3b6; border-top: 2px solid #999; }

.status {
  position: relative;
  border-top: 2px solid #999;
  border-bottom: 1px solid #bfe3ea;
  background: #edeff2;
  box-shadow: inset 0 -1px #45616c;
}
.msg { display: flex; align-items: center; gap: 2px; margin: 0; padding: 7px 0 0 67px; font-size: 11px; }
.srow { display: flex; align-items: center; height: 29px; padding: 3px 18px 3px 6px; }
.sep { width: 1px; height: 23px; background: #c4c7ca; }
.grow { flex: 1; }
.slot { width: 35px; }
.sq { display: grid; place-items: center; width: 22px; height: 22px; border: 1px solid #c4c7ca; margin-right: 4px; }
.sq.down { border-top: 2px solid #999; border-left-color: #999; }
.sq + .sep { margin-left: 6px; }
.navy { color: #003087; }
.dots { display: flex; align-items: center; justify-content: center; gap: 1px; width: 31px; }
.dots i { width: 6px; height: 6px; border-radius: 50%; background: #d5d5d5; }
.dots i:first-child { width: 10px; height: 10px; background: #b9b9b9; }
.find { display: grid; place-items: center; width: 40px; height: 22px; margin: 0 2px 0 3px; border: 1px solid #c8ccd0; border-radius: 3px; }
.filter { position: relative; width: 178px; height: 19px; margin-left: 97px; }
.filter select {
  appearance: none;
  width: 100%;
  height: 100%;
  padding: 0 5px;
  border: 1px solid #a4a7aa;
  border-radius: 0;
  background: #f8f8f8;
  color: #111;
  font: inherit;
}
.filter .caret { position: absolute; right: 4px; top: 8px; }
.mark {
  position: absolute;
  right: 5px;
  bottom: 4px;
  width: 206px;
  height: 62px;
  display: flex;
  background: rgba(255, 255, 255, .36);
  pointer-events: none;
}
.mark svg { opacity: .8; }
.mark div { display: flex; flex-direction: column; margin-left: -2px; }
.mark strong { font: bold 29px/40px "Noto Sans CJK SC", sans-serif; color: rgba(95, 192, 138, .75); padding-left: 12px; white-space: nowrap; }
.mark span { font-size: 15px; line-height: 18px; color: rgba(160, 205, 200, .75); }
```
